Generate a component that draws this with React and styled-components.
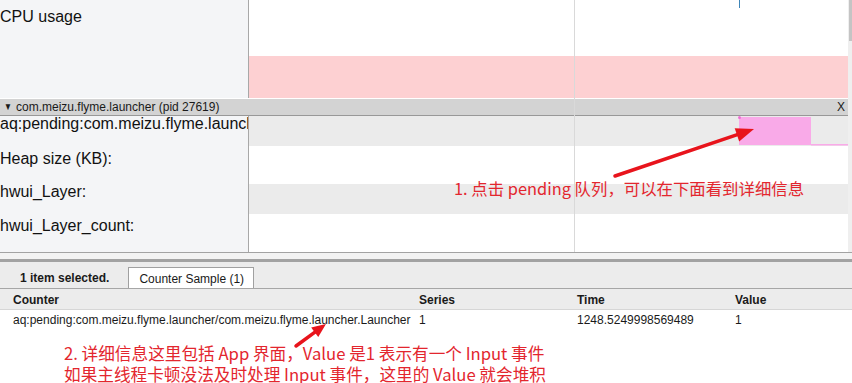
import React from 'react';
import styled, { createGlobalStyle } from 'styled-components';

const GlobalStyle = createGlobalStyle`
  html, body { margin: 0; padding: 0; background: #fff; }
  body { font-family: "Liberation Sans", Arial, sans-serif; }
  * { box-sizing: border-box; }
`;

const Screen = styled.div`
  position: relative;
  width: 852px;
  height: 383px;
  overflow: hidden;
  background: #fff;
  display: flex;
  flex-direction: column;
`;

const TracksArea = styled.div`
  position: relative;
  display: flex;
  height: 253px;
  flex-shrink: 0;
  border-bottom: 1px solid #a3a3a3;
`;

const TrackList = styled.div`
  flex: 1;
  min-width: 0;
  display: flex;
  flex-direction: column;
`;

const Scrollbar = styled.div`
  width: 4px;
  flex-shrink: 0;
  background: #efefef;
  display: flex;
  flex-direction: column;
`;

const ScrollThumb = styled.div`
  margin-left: 1px;
  height: 41px;
  background: #c4c4c4;
`;

const GridLine = styled.div`
  position: absolute;
  left: 574px;
  top: 0;
  bottom: 0;
  width: 1px;
  background: #d9d9d9;
  pointer-events: none;
`;

const Track = styled.div`
  display: flex;
  flex-shrink: 0;
  height: ${(p) => p.$h}px;
`;

const Label = styled.div`
  width: 249px;
  flex-shrink: 0;
  background: #f4f5f7;
  border-right: 1px solid #a8a8a8;
  font-size: 16px;
  line-height: 16px;
  color: #111;
  white-space: nowrap;
  overflow: hidden;
  padding-top: ${(p) => p.$pt || 0}px;
`;

const Canvas = styled.div`
  flex: 1;
  min-width: 0;
  background: ${(p) => p.$bg || '#fff'};
  display: flex;
`;

const Chart = styled.svg`
  display: block;
  width: 100%;
  height: 100%;
`;

const ProcessHeader = styled.div`
  height: 18px;
  flex-shrink: 0;
  background: #d3d3d3;
  border-top: 1px solid #fff;
  border-bottom: 1px solid #989898;
  display: flex;
  align-items: center;
  padding: 0 3px 0 4px;
  font-size: 12px;
  line-height: 14px;
  color: #1a1a1a;
`;

const Caret = styled.span`
  font-size: 10px;
  width: 12px;
  line-height: 14px;
  transform: scaleX(0.8);
  transform-origin: left center;
`;

const HeaderTitle = styled.span`
  flex: 1;
`;

const CloseX = styled.span`
  font-size: 12px;
`;

const Splitter = styled.div`
  height: 9px;
  flex-shrink: 0;
  background: #f3f3f3;
  border-bottom: 3px solid #a2a2a2;
`;

const TabBar = styled.div`
  height: 27px;
  flex-shrink: 0;
  background: #ececec;
  border-bottom: 1px solid #a6a6a6;
  display: flex;
  align-items: flex-end;
  padding-left: 20px;
  gap: 19px;
  font-size: 12px;
  color: #1a1a1a;
`;

const Status = styled.span`
  font-weight: bold;
  align-self: center;
  padding-top: 6px;
`;

const Tab = styled.div`
  height: 21px;
  background: #fff;
  border: 1px solid #a0a0a0;
  border-bottom: none;
  padding: 1px 9px 0 10px;
  display: flex;
  align-items: center;
`;

const TableRow = styled.div`
  display: grid;
  grid-template-columns: 406px 158px 158px 1fr;
  padding-left: 13px;
  align-items: center;
  flex-shrink: 0;
  font-size: 12px;
  color: #1a1a1a;
  height: ${(p) => (p.$head ? 21 : 19)}px;
  padding-top: ${(p) => (p.$head ? 1 : 0)}px;
  background: ${(p) => (p.$head ? '#ececec' : '#fff')};
  border-bottom: ${(p) => (p.$head ? '1px solid #d6d6d6' : 'none')};
  font-weight: ${(p) => (p.$head ? 'bold' : 'normal')};
`;

const Cell = styled.span`
  white-space: nowrap;
`;

const Note = styled.div`
  position: absolute;
  left: ${(p) => p.$x}px;
  top: ${(p) => p.$y}px;
  font-family: "Noto Sans CJK SC", "Noto Sans", sans-serif;
  font-size: ${(p) => p.$size}px;
  line-height: 21px;
  color: #e3262e;
  white-space: nowrap;
`;

const ArrowLayer = styled.svg`
  position: absolute;
  left: 0;
  top: 0;
  width: 852px;
  height: 383px;
  pointer-events: none;
`;

function Arrow({ x1, y1, x2, y2, head = 16, half = 6, color = '#e8141c', w = 3.5 }) {
  const dx = x2 - x1;
  const dy = y2 - y1;
  const len = Math.hypot(dx, dy);
  const ux = dx / len;
  const uy = dy / len;
  const bx = x2 - ux * head;
  const by = y2 - uy * head;
  const px = -uy;
  const py = ux;
  const pts = `${x2},${y2} ${bx + px * half},${by + py * half} ${bx - px * half},${by - py * half}`;
  return (
    <g>
      <line x1={x1} y1={y1} x2={bx + ux * 2} y2={by + uy * 2} stroke={color} strokeWidth={w} strokeLinecap="round" />
      <polygon points={pts} fill={color} />
    </g>
  );
}

const counterTracks = [
  { name: 'aq:pending:com.meizu.flyme.launcher/com.meizu.flyme.launcher.Launcher', h: 30, pt: 0, bg: '#ebebeb', bar: true },
  { name: 'Heap size (KB):', h: 38, pt: 5, bg: '#fff' },
  { name: 'hwui_Layer:', h: 30, pt: 0, bg: '#ebebeb' },
  { name: 'hwui_Layer_count:', h: 38, pt: 4, bg: '#fff' },
];

export default function App() {
  return (
    <Screen>
      <GlobalStyle />
      <TracksArea>
        <TrackList>
          <Track $h={98}>
            <Label $pt={9}>CPU usage</Label>
            <Canvas>
              <Chart viewBox="0 0 599 98" preserveAspectRatio="none">
                <rect x="0" y="56" width="599" height="42" fill="#fdd0d2" />
                <rect x="490" y="0" width="1" height="8" fill="#3f86b8" />
              </Chart>
            </Canvas>
          </Track>
          <ProcessHeader>
            <Caret>▼</Caret>
            <HeaderTitle>com.meizu.flyme.launcher (pid 27619)</HeaderTitle>
            <CloseX>X</CloseX>
          </ProcessHeader>
          {counterTracks.map((t) => (
            <Track key={t.name} $h={t.h}>
              <Label $pt={t.pt}>{t.name}</Label>
              <Canvas $bg={t.bg}>
                {t.bar && (
                  <Chart viewBox={`0 0 599 ${t.h}`} preserveAspectRatio="none">
                    <rect x="490" y="1" width="72" height="28" fill="#f9aae8" />
                    <rect x="562" y="28" width="37" height="1.5" fill="#f9aae8" />
                    <circle cx="490.5" cy="1.5" r="1.5" fill="#ef6fd4" />
                  </Chart>
                )}
              </Canvas>
            </Track>
          ))}
        </TrackList>
        <Scrollbar>
          <ScrollThumb />
        </Scrollbar>
        <GridLine />
      </TracksArea>
      <Splitter />
      <TabBar>
        <Status>1 item selected.</Status>
        <Tab>Counter Sample (1)</Tab>
      </TabBar>
      <TableRow $head>
        <Cell>Counter</Cell>
        <Cell>Series</Cell>
        <Cell>Time</Cell>
        <Cell>Value</Cell>
      </TableRow>
      <TableRow>
        <Cell>aq:pending:com.meizu.flyme.launcher/com.meizu.flyme.launcher.Launcher</Cell>
        <Cell>1</Cell>
        <Cell>1248.5249998569489</Cell>
        <Cell>1</Cell>
      </TableRow>

      <Note $x={454} $y={178} $size={16.4}>1. 点击 pending 队列，可以在下面看到详细信息</Note>
      <Note $x={64} $y={343} $size={16.65}>
        2. 详细信息这里包括 App 界面，Value 是1 表示有一个 Input 事件
        <br />
        如果主线程卡顿没法及时处理 Input 事件，这里的 Value 就会堆积
      </Note>
      <ArrowLayer viewBox="0 0 852 383">
        <Arrow x1={615} y1={176} x2={754} y2={129} head={18} half={7} />
        <Arrow x1={296} y1={346} x2={326} y2={324} head={14} half={6} />
      </ArrowLayer>
    </Screen>
  );
}
